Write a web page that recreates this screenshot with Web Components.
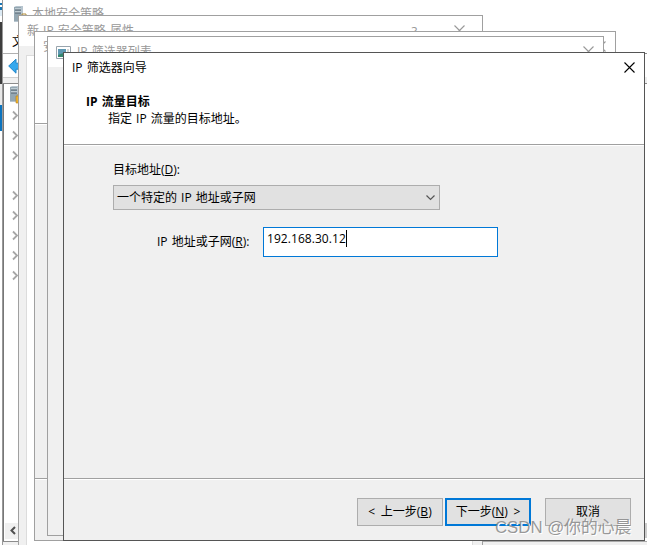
<!DOCTYPE html>
<html lang="zh-CN">
<head>
<meta charset="utf-8">
<title>IP 筛选器向导</title>
<style>
html,body{margin:0;height:545px;overflow:hidden;background:#fff}
body{font:12px/16px "Open Sans","Noto Sans CJK SC",sans-serif;color:#000;word-spacing:1px}
</style>
</head>
<body>
<desk-top></desk-top>
<script>
const define=(name,html)=>{
  const t=document.createElement('template');t.innerHTML=html;
  customElements.define(name,class extends HTMLElement{
    constructor(){super();this.attachShadow({mode:'open'}).append(t.content.cloneNode(true));}
  });
};
define('win-frame',`<style>
:host{position:absolute;box-sizing:border-box;display:flex;flex-direction:column;border:1px solid var(--edge,#a0a0a0);background:#f0f0f0;overflow:hidden}
header{display:flex;align-items:center;background:#fff;flex:none;height:30px;padding:0 9px 0 8px;color:var(--ink,#999);box-sizing:border-box;gap:6px;white-space:nowrap}
.t{flex:1}
</style><header><slot name="icon"></slot><span class="t"><slot name="title"></slot></span><slot name="tools"></slot></header><slot></slot>`);
define('close-x',`<style>:host{display:block;width:11px;height:11px;margin-top:-1px}svg{display:block}</style><svg width="11" height="11"><path d="M.5.5l10 10M10.5.5l-10 10" stroke="currentColor" fill="none" stroke-width="1.1"/></svg>`);
define('server-icon',`<style>:host{display:block;width:17px;height:18px;flex:none}svg{display:block}</style><svg width="17" height="18"><path d="M1 1l2-1h7v16H1z" fill="#b7c5cf"/><path d="M1 1h7v14H1z" fill="#94a7b2"/><path d="M2 3h6M2 6h6" stroke="#e9f1f5"/><path d="M2 4h6M2 7h6" stroke="#52636e"/><path d="M7 10h8v7H7z" fill="#eeb52e" stroke="#b87d18" stroke-width=".6"/><path d="M9 10V8h4v2" fill="none" stroke="#b08a35"/></svg>`);
define('tree-arrow',`<style>:host{display:block;height:20px}svg{display:block}</style><svg width="6" height="20"><path d="M1 6.500l4 4-4 4" fill="none" stroke="#a6a6a6" stroke-width="1.8"/></svg>`);
define('push-button',`<style>
:host{display:flex;box-sizing:border-box;width:86px;height:28px;align-items:center;justify-content:center;background:#e1e1e1;border:1px solid #adadad;white-space:pre;word-spacing:2.5px}
:host([primary]){border:2px solid #0078d7}
</style><span><slot></slot></span>`);
define('combo-box',`<style>
:host{display:flex;box-sizing:border-box;width:327px;height:25px;align-items:center;justify-content:space-between;background:#e1e1e1;border:1px solid #adadad;padding:0 4px 0 3px}
</style><span><slot></slot></span><svg width="9" height="6"><path d="M.5.5l4 4 4-4" fill="none" stroke="#555" stroke-width="1.2"/></svg>`);
define('text-field',`<style>
:host{display:flex;box-sizing:border-box;width:235px;height:30px;background:#fff;border:1px solid #0078d7;padding:3px 0 0 3px}
i{width:1px;height:17px;background:#000;margin-top:-1px}
span{line-height:16px;width:79px;white-space:nowrap;letter-spacing:.06px}
</style><span><slot></slot></span><i></i>`);
define('console-window',`<style>
:host{position:absolute;left:2px;top:0;width:645px;height:545px;display:flex;flex-direction:column;box-sizing:border-box;border-left:1px solid #999;background:#fff;color:#999}
.title{display:flex;gap:2px;height:30px;padding:6px 0 0 10px;box-sizing:border-box}
.menu{height:23px;color:#000;padding:4px 0 0 9px;box-sizing:border-box;overflow:hidden}
.bar{height:24px;border-top:1px solid #b0b0b0;box-sizing:border-box;padding:4px 0 0 5px}
.gap{height:7px;background:#f0f0f0;border-bottom:1px solid #8c8c8c;border-top:1px solid #d0d0d0;box-sizing:border-box}
.tree{height:457px;border-left:1px solid #777;padding:2px 0 0 5px;box-sizing:border-box;display:flex;flex-direction:column;overflow:hidden}
.rows{padding:1px 0 0 3px;flex:1}
.blank{height:20px}
.scroll{width:16px;height:16px;background:#f0f0f0;margin:0 0 2px -4px}
.foot{flex:1;background:#f0f0f0;border-top:1px solid #8c8c8c}
</style>
<div class="title"><server-icon></server-icon><span>本地安全策略</span></div>
<div class="menu">文件(F)</div>
<div class="bar"><svg width="16" height="16"><path d="M.7 8L8 1.200v4h7v6H8v4z" fill="#35a8ed" stroke="#2086c9"/></svg></div>
<div class="gap"></div>
<div class="tree"><server-icon></server-icon><div class="rows"><tree-arrow></tree-arrow><tree-arrow></tree-arrow><tree-arrow></tree-arrow><div class="blank"></div><tree-arrow></tree-arrow><tree-arrow></tree-arrow><tree-arrow></tree-arrow><tree-arrow></tree-arrow><tree-arrow></tree-arrow></div>
<div class="scroll"><svg width="16" height="16"><path d="M10 4L6.500 7.500l3.500 3.500" fill="none" stroke="#505050" stroke-width="2"/></svg></div></div>
<div class="foot"></div>`);
define('desk-strip',`<style>
:host{display:flex;flex-direction:column;width:3px;height:545px;background:#fff}
div{flex:none}
.a{height:22px;background:linear-gradient(#fff 3px,#1976b5 3px 5px,#fff 5px 7px,#1976b5 7px 10px,#dceaf4 10px 16px,#fff 16px)}
.b{height:62px;background:#3d3d3d}.c{height:21px;background:#e8e8e8}.d{height:26px;background:#0c73bd}
</style><div class="a"></div><div class="b"></div><div class="c"></div><div class="d"></div>`);
define('wizard-page',`<style>
:host{display:flex;flex:1;flex-direction:column}
.head{background:#fff;height:62px;border-bottom:1px solid #a0a0a0;box-shadow:0 1px #fff;padding:11px 0 0 22px;box-sizing:border-box;flex:none}
.head p{margin:1px 0 0 22px}
b{display:block}
.body{flex:1;padding:17px 0 0 49px}
.row{display:flex;margin-top:17px;padding-left:44px;align-items:center;gap:11px}
combo-box{margin-top:7px}
.foot{height:62px;border-top:1px solid #a0a0a0;box-shadow:inset 0 1px #fff;display:flex;padding:19px 13px 0 0;box-sizing:border-box;justify-content:flex-end}
.n{margin:0 14px 0 2px}
.lab{width:95px;white-space:nowrap}
</style>
<div class="head"><b>IP 流量目标</b><p>指定 IP 流量的目标地址。</p></div>
<div class="body"><div>目标地址(<u>D</u>):</div><combo-box>一个特定的 IP 地址或子网</combo-box>
<div class="row"><span class="lab">IP 地址或子网(<u>R</u>):</span><text-field>192.168.30.12</text-field></div></div>
<div class="foot"><push-button>&lt; 上一步(<u>B</u>)</push-button><push-button class="n" primary>下一步(<u>N</u>) &gt;</push-button><push-button>取消</push-button></div>`);
define('desk-top',`<style>
:host{display:block;position:relative;width:647px;height:545px;overflow:hidden}
.w2{left:18px;top:15px;width:465px;height:540px}
.w3{left:34px;top:31px;width:582px;height:510px}
.w4{left:47px;top:36px;width:557px;height:500px}
.w5{left:63px;top:52px;width:582px;height:489px;--edge:#555;--ink:#000}
.page{flex:1;background:#fff;margin:9px 9px 0 7px;border:1px solid #dcdcdc}
.h3{background:#fff;height:61px;border-bottom:1px solid #a0a0a0;box-shadow:0 1px #fff;flex:none}
.f3{margin-top:auto;height:62px;border-top:1px solid #a0a0a0;box-shadow:inset 0 1px #fff;box-sizing:border-box;flex:none}
.tools{display:flex;align-items:center;gap:37px;margin-right:8px}
.tools span{font-size:13px}
.edge{position:absolute;left:645px;top:53px;width:2px;height:31px;border:solid #888;border-width:1px 0;background:linear-gradient(#fff 23px,#eee 23px);box-sizing:border-box}
.thumb{position:absolute;left:645px;top:523px;width:2px;height:15px;background:#cdcdcd}
.mark{position:absolute;left:495px;top:517px;font:16.8px/22px "Liberation Sans","Noto Sans CJK SC",sans-serif;color:rgba(135,135,135,.85);text-shadow:1px 1px #fff;white-space:nowrap;word-spacing:0}
.low{position:absolute;left:482px;top:541px;width:165px;height:4px;background:#f0f0f0;box-sizing:border-box;border-top:1px solid #aaa}
</style>
<desk-strip></desk-strip><console-window></console-window><div class="edge"></div><div class="thumb"></div><div class="low"></div>
<win-frame class="w2"><span slot="title">新 IP 安全策略 属性</span><div slot="tools" class="tools"><span>?</span><close-x></close-x></div><div class="page"></div></win-frame>
<win-frame class="w3"><span slot="title">安全规则向导</span><close-x slot="tools"></close-x><div class="h3"></div><div class="f3"></div></win-frame>
<win-frame class="w4"><svg slot="icon" width="15" height="13"><path d="M.5.5h14v12H.5z" fill="#fff" stroke="#99a4ad"/><path d="M2 3h8v8H2z" fill="#35866e"/><path d="M2 3h8v3L2 9z" fill="#5e98b2"/><path d="M11 4h2M11 6h2M11 8h2" stroke="#aaa"/></svg><span slot="title">IP 筛选器列表</span><close-x slot="tools"></close-x></win-frame>
<win-frame class="w5"><span slot="title">IP 筛选器向导</span><close-x slot="tools"></close-x><wizard-page></wizard-page></win-frame>
<div class="mark">CSDN @你的心晨</div>`);
</script>
</body>
</html>
